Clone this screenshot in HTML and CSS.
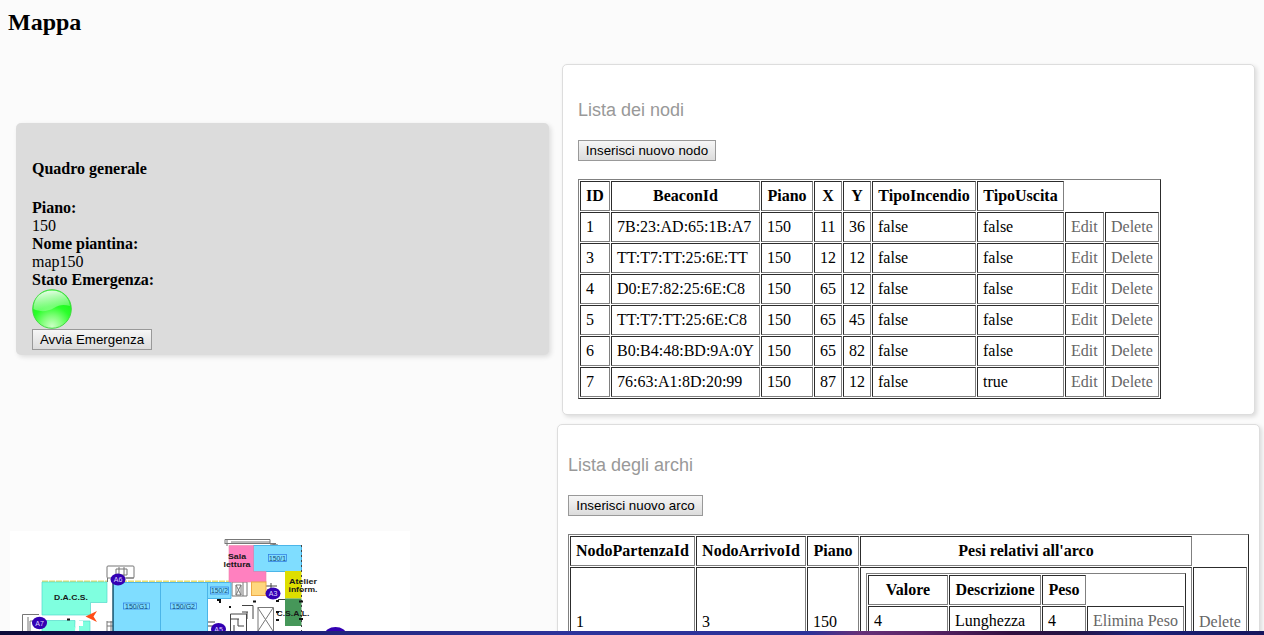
FILE: index.html
```html
<!DOCTYPE html>
<html lang="it">
<head>
<meta charset="utf-8">
<title>Mappa</title>
<link rel="stylesheet" href="styles.css">
</head>
<body>
<h2 class="title">Mappa</h2>
<main class="layout">
  <div class="left">
    <section class="summary">
      <h4 class="summary-title">Quadro generale</h4>
      <b>Piano:</b><span>150</span>
      <b>Nome piantina:</b><span>map150</span>
      <b>Stato Emergenza:</b>
      <svg class="lamp" width="40" height="40" viewBox="0 0 40 40">
        <defs>
          <radialGradient id="lampBase" cx=".5" cy=".95" r=".8"><stop offset="0" stop-color="#ccffc6"/><stop offset=".35" stop-color="#7dff76"/><stop offset=".65" stop-color="#2bff2b"/><stop offset="1" stop-color="#16f516"/></radialGradient>
          <linearGradient id="lampShine" x1="0.1" y1="0" x2=".4" y2="1"><stop offset="0" stop-color="#fff" stop-opacity=".95"/><stop offset="1" stop-color="#fff" stop-opacity=".22"/></linearGradient>
        </defs>
        <circle cx="20" cy="20" r="19.3" fill="url(#lampBase)" stroke="#43d943"/>
        <path d="M1.500 20C1.500 8 10 1.500 20 1.500S37 8 38 17C31 15 27 16 22 19C15 23 8 23 1.500 20Z" fill="url(#lampShine)"/>
      </svg>
      <button class="btn btn-alarm">Avvia Emergenza</button>
    </section>
    <svg class="plan" width="400" height="100" viewBox="10 531 400 100">
      <rect x="10" y="531" width="400" height="100" fill="#fff"/>
      <g fill="none" stroke="#777">
        <rect x="107" y="566" width="27" height="12" rx="1"/>
        <path d="M107.500 578V582M134 578H126M116 569H127V575H116ZM119 567V577M124 567V577"/>
        <path d="M22.500 631V614.500H39M28 631V617M30 631V621H36M107 622H114M107 626H114M107 621V631M111 621V631"/>
        <path d="M225 544V539.500H270V544M225 543.500H276M227 539V546M231 542H270M270 544L278 545"/>
        <path d="M232 582H247V596H232ZM236 585H241V595H236ZM236 585L241 595M241 585L236 595M243 582V596"/>
        <path d="M266 586H277M267 590H277M271 583V594" stroke="#444"/>
        <path d="M258 607.500H273.500V631M258 607V631M258 608L273 631M273 608L258 631"/>
        <path d="M242 605.500H253V619M247 612V619M242 612H248M230.500 631V614H246.500V631M230 619H239M238 619V626H244M234 625V631M208 622H215M208 626H213M278 599.500H301" stroke="#444"/>
      </g>
      <path d="M42 581.500H107M114 581.500H229" stroke="#e8df70" stroke-width="2" stroke-dasharray="6 1"/>
      <path d="M42 582H107V602.500H90.500V615H42ZM42 620.500H75V627H79V621H90V640H42Z" fill="#7fffdf" stroke="#54d9ca" stroke-width=".7"/>
      <path d="M76 621H83V626H79V631H75Z" fill="#fff"/>
      <g fill="#7fddff" stroke="#4bb5e8">
        <rect x="113.500" y="582.500" width="47" height="60"/><rect x="160.500" y="582.500" width="47" height="60"/><path d="M207.500 582.500H231V598.500H207.500Z"/><rect x="253.500" y="545.500" width="48" height="26"/>
      </g>
      <path d="M229 545.500H253.500V571.500H266V582H229Z" fill="#ff80bf" stroke="#ed85aa" stroke-width=".6"/>
      <rect x="251.500" y="582" width="14.500" height="13.500" fill="#ffd77e" stroke="#eca947"/>
      <rect x="285" y="571" width="16.500" height="27.500" fill="#dede00"/><rect x="285" y="598.500" width="16.500" height="27.500" fill="#469759"/>
      <path d="M301.500 545V631" stroke="#444" stroke-dasharray="2 3"/><path d="M113 582V631" stroke="#225a70" stroke-width="1.500"/>
      <path d="M67 619.500H70M217 600H220V603M253 601.500H256M276 601H279M299 601.500H303M276 612H279M299 619H303M276 620H279M230 606V608" fill="none" stroke="#111" stroke-width="2"/>
      <path d="M85.500 616.500L97 611L93.500 616.500L97 622Z" fill="#ff4c16"/>
      <g class="plan-room"><rect x="123.500" y="603" width="26" height="6"/><text x="136.500" y="608.500" textLength="23" lengthAdjust="spacingAndGlyphs">150/G1</text><rect x="170.500" y="603" width="26" height="6"/><text x="183.500" y="608.500" textLength="23" lengthAdjust="spacingAndGlyphs">150/G2</text><rect x="210.500" y="587" width="18" height="7"/><text x="219.500" y="593" textLength="17" lengthAdjust="spacingAndGlyphs">150/2</text><rect x="268.500" y="554.500" width="18" height="7"/><text x="277.500" y="560.500" textLength="17" lengthAdjust="spacingAndGlyphs">150/1</text></g>
      <g class="plan-name"><text x="71" y="600" textLength="34" lengthAdjust="spacingAndGlyphs">D.A.C.S.</text><text x="237" y="559" textLength="18" lengthAdjust="spacingAndGlyphs">Sala</text><text x="237" y="567" textLength="27" lengthAdjust="spacingAndGlyphs">lettura</text><text x="303" y="584" textLength="28" lengthAdjust="spacingAndGlyphs">Atelier</text><text x="303" y="592" textLength="29" lengthAdjust="spacingAndGlyphs">inform.</text><text x="293" y="616" textLength="33" lengthAdjust="spacingAndGlyphs">C.S.A.L.</text></g>
      <g fill="#3300b3"><ellipse cx="118" cy="579.500" rx="7.500" ry="6"/><ellipse cx="39.500" cy="623" rx="7.500" ry="6.200"/><ellipse cx="273" cy="593.500" rx="7.500" ry="6"/><ellipse cx="218.500" cy="629" rx="7.500" ry="6"/><ellipse cx="335.500" cy="635" rx="11" ry="8"/></g>
      <g class="plan-pin"><text x="118" y="582">A6</text><text x="39.500" y="626">A7</text><text x="273" y="596">A3</text><text x="218.500" y="632">A5</text></g>
    </svg>
  </div>
  <div class="right">
    <section class="card card-nodes">
      <h3 class="card-title">Lista dei nodi</h3>
      <button class="btn btn-node">Inserisci nuovo nodo</button>
      <table class="grid grid-nodes">
        <colgroup><col class="w30"><col class="w149"><col class="w52"><col class="w28"><col class="w28"><col class="w104"><col class="w87"><col class="w39"><col class="w54"></colgroup>
        <tr><th>ID</th><th>BeaconId</th><th>Piano</th><th>X</th><th>Y</th><th>TipoIncendio</th><th>TipoUscita</th></tr>
        <tr><td>1</td><td>7B:23:AD:65:1B:A7</td><td>150</td><td>11</td><td>36</td><td>false</td><td>false</td><td><a>Edit</a></td><td><a>Delete</a></td></tr>
        <tr><td>3</td><td>TT:T7:TT:25:6E:TT</td><td>150</td><td>12</td><td>12</td><td>false</td><td>false</td><td><a>Edit</a></td><td><a>Delete</a></td></tr>
        <tr><td>4</td><td>D0:E7:82:25:6E:C8</td><td>150</td><td>65</td><td>12</td><td>false</td><td>false</td><td><a>Edit</a></td><td><a>Delete</a></td></tr>
        <tr><td>5</td><td>TT:T7:TT:25:6E:C8</td><td>150</td><td>65</td><td>45</td><td>false</td><td>false</td><td><a>Edit</a></td><td><a>Delete</a></td></tr>
        <tr><td>6</td><td>B0:B4:48:BD:9A:0Y</td><td>150</td><td>65</td><td>82</td><td>false</td><td>false</td><td><a>Edit</a></td><td><a>Delete</a></td></tr>
        <tr><td>7</td><td>76:63:A1:8D:20:99</td><td>150</td><td>87</td><td>12</td><td>false</td><td>true</td><td><a>Edit</a></td><td><a>Delete</a></td></tr>
      </table>
    </section>
    <section class="card card-arcs">
      <h3 class="card-title">Lista degli archi</h3>
      <button class="btn btn-arc">Inserisci nuovo arco</button>
      <table class="grid grid-arcs">
        <colgroup><col class="w125"><col class="w110"><col class="w52"><col class="w332"><col class="w54"></colgroup>
        <tr><th>NodoPartenzaId</th><th>NodoArrivoId</th><th>Piano</th><th>Pesi relativi all'arco</th></tr>
        <tr class="arc-row"><td>1</td><td>3</td><td>150</td><td class="weights">
          <table class="grid grid-weights">
            <colgroup><col class="w80"><col class="w92"><col class="w44"><col class="w97"></colgroup>
            <tr><th>Valore</th><th>Descrizione</th><th>Peso</th></tr>
            <tr><td>4</td><td>Lunghezza</td><td>4</td><td><a>Elimina Peso</a></td></tr>
          </table>
        </td><td><a>Delete</a></td></tr>
      </table>
    </section>
  </div>
</main>
<div class="strip"></div>
</body>
</html>
```
FILE: styles.css
```css
html { height: 100%; overflow: hidden; }
body { margin: 0; height: 635px; overflow: hidden; background: #fbfbfb; color: #000; font: 16px/18px "Liberation Serif", "Times New Roman", serif; }
.title { margin: 0; padding: 8px 8px 0; height: 56px; box-sizing: border-box; font-size: 24px; line-height: 28px; }
.layout { display: flex; align-items: flex-start; height: 579px; overflow: hidden; }
.left { width: 549px; flex: none; padding-top: 67px; }
.summary { display: flex; flex-direction: column; align-items: flex-start; box-sizing: border-box; width: 533px; height: 232px; margin-left: 16px; padding: 37px 16px 0; background: #dcdcdc; border-radius: 5px; box-shadow: 2px 2px 5px rgba(0,0,0,.12); }
.summary-title { margin: 0 0 21px; font-size: 16px; }
.lamp { display: block; flex: none; }
.plan { display: block; margin: 176px 0 0 10px; font-family: "Liberation Sans", Arial, sans-serif; }
.plan text { text-anchor: middle; }
.plan-room rect { fill: none; stroke: #2d78e0; stroke-width: .7; }
.plan-room text { font-size: 6.5px; fill: #124b78; }
.plan-name text { font-size: 7.5px; font-weight: bold; fill: #181818; }
.plan-pin text { font-size: 7px; fill: #ddd5ff; }
.right { flex: none; padding: 8px 5px 0 8px; }
.card { box-sizing: border-box; background: #fff; border: 1px solid #ddd; border-radius: 5px; box-shadow: 2px 2px 4px rgba(0,0,0,.13); }
.card-nodes { width: 693px; height: 351px; margin-left: 5px; padding: 34px 15px 0; }
.card-arcs { width: 703px; height: 300px; margin-top: 9px; padding: 29px 10px 0; }
.card-title { margin: 0; height: 41px; color: #999; font: 18px/22px "Liberation Sans", Arial, sans-serif; }
.btn { display: block; box-sizing: border-box; height: 21px; padding: 0; border: 1px solid #999; background: linear-gradient(#f6f6f6, #dcdcdc); color: #000; font: 13.333px/15px "Liberation Sans", Arial, sans-serif; white-space: nowrap; }
.btn-alarm { width: 120px; flex: none; }
.btn-node { width: 138px; margin-bottom: 18px; }
.btn-arc { width: 135px; margin-bottom: 18px; }
.grid { table-layout: fixed; border-collapse: separate; border-spacing: 1px; border: 1px solid; border-color: #808080 #2c2c2c #2c2c2c #808080; }
.grid-nodes { width: 583px; }
.grid-arcs { width: 681px; }
.grid-weights { width: 320px; }
.grid td, .grid th { box-sizing: border-box; height: 30px; padding: 5px; border: 1px solid; border-color: #2c2c2c #808080 #808080 #2c2c2c; text-align: left; white-space: nowrap; }
.grid th { text-align: center; }
.arc-row > td { height: 110px; }
.grid .weights { vertical-align: top; }
.grid a { color: #666; }
.w28 { width: 28px; } .w30 { width: 30px; } .w39 { width: 39px; } .w44 { width: 44px; }
.w52 { width: 52px; } .w54 { width: 54px; } .w80 { width: 80px; } .w87 { width: 87px; }
.w92 { width: 92px; } .w97 { width: 97px; } .w104 { width: 104px; } .w110 { width: 110px; }
.w125 { width: 125px; } .w149 { width: 149px; } .w332 { width: 332px; }
.strip { position: fixed; left: 0; right: 0; bottom: 0; height: 4px; background: linear-gradient(90deg, #0c0b38, #15155c 15%, #252a85 30%, #2d339b 45%, #2d3298 64%, #663078 68%, #5b2568 73%, #321040 80%, #241545 85%, #1c2078 90%, #15155c); }
```
